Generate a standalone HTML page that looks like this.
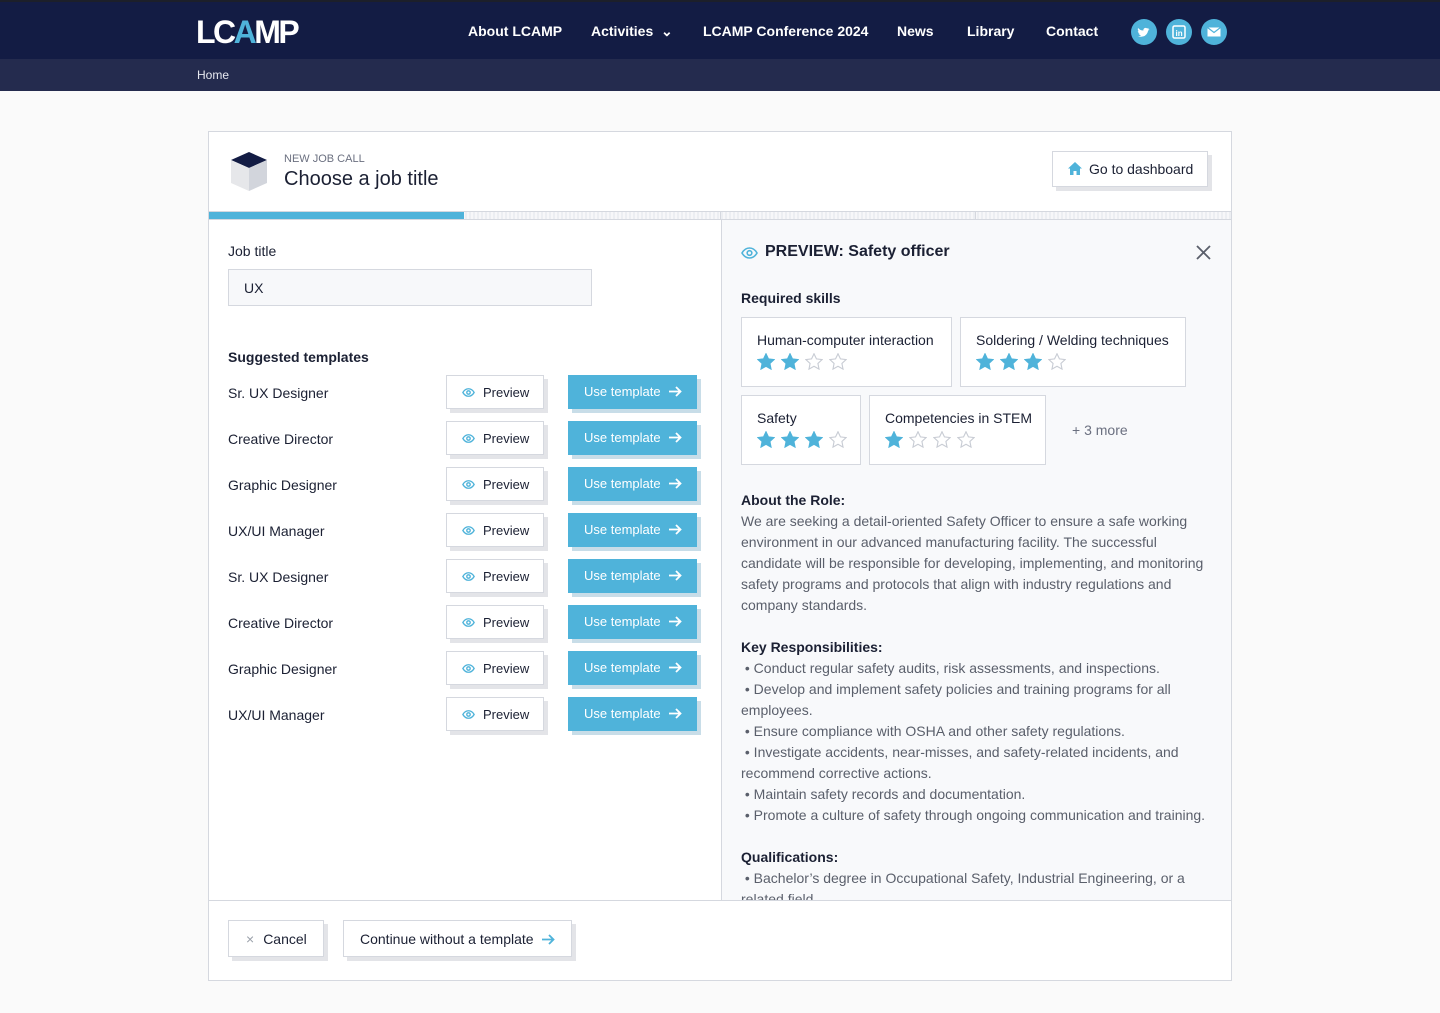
<!DOCTYPE html>
<html><head><meta charset="utf-8"><style>
*{box-sizing:border-box;margin:0;padding:0}
body{width:1440px;height:1013px;background:#fafafa;font-family:"Liberation Sans",Arial,sans-serif;color:#1b2033;position:relative;overflow:hidden}
.top{position:absolute;left:0;top:0;width:1440px;height:59px;background:#131c44;border-top:2px solid #1c1f2a}
.crumb{position:absolute;left:0;top:59px;width:1440px;height:32px;background:#242b4e;color:#e6e8ef;font-size:12px;padding:9px 0 0 197px}
.nav a{position:absolute;top:21px;color:#fff;font-weight:bold;font-size:14px;text-decoration:none}
.soc{position:absolute;top:17px;width:26px;height:26px;border-radius:50%;background:#4fb3da}
.card{position:absolute;left:208px;top:131px;width:1024px;height:850px;background:#fff;border:1px solid #d5d8df}
.abs{position:absolute}
.btn{position:absolute;background:#fff;border:1px solid #d5d8df;box-shadow:4px 4px 0 #e3e4e8;font-size:13px;color:#1b2033}
.ub{position:absolute;background:#4fb3da;color:#fff;font-size:13px;box-shadow:4px 4px 0 #c8dde8}
.row{position:absolute;left:19px;font-size:14px}
.skill{position:absolute;border:1px solid #d5d8df;background:#fff;font-size:14px;padding:14px 0 0 15px}
.skill .st{margin-top:5px;display:flex;gap:6px}
p.t{font-size:14px;line-height:21px;color:#5a5f6b}
h4{font-size:14px;font-weight:bold;color:#1b2033;line-height:21px}
</style></head><body>
<div class="top">
<div class="abs" style="left:196px;top:12px;font-size:32px;font-weight:bold;color:#fff;letter-spacing:-2.5px;font-family:'Liberation Sans',sans-serif">L<span>C</span><span style="color:#4fb3da">A</span>MP</div>
<div class="nav">
<a style="left:468px">About LCAMP</a>
<a style="left:591px">Activities &nbsp;⌄</a>
<a style="left:703px">LCAMP Conference 2024</a>
<a style="left:897px">News</a>
<a style="left:967px">Library</a>
<a style="left:1046px">Contact</a>
</div>
<div class="soc" style="left:1131px"><svg width="26" height="26" viewBox="0 0 26 26"><path d="M7 17c4 2 9 0 10-5l1.5-2-1.6.4.9-1.5-1.7.6c-1.3-1.3-4-.5-3.7 2-2.5 0-4-1-5.3-2.5-.7 1.3 0 2.8 1 3.3l-1.3-.2c0 1.2 1 2 2 2.4h-1.3c.4 1 1.4 1.5 2.300 1.6C9.5 17 8.3 17.2 7 17z" fill="#fff"/></svg></div>
<div class="soc" style="left:1166px"><svg width="26" height="26"><rect x="7" y="7" width="12" height="12" rx="1.5" fill="none" stroke="#fff" stroke-width="1.5"/><text x="9.5" y="17" font-size="8" font-weight="bold" fill="#fff" font-family="Liberation Sans">in</text></svg></div>
<div class="soc" style="left:1201px"><svg width="26" height="26"><rect x="6.5" y="8.5" width="13" height="9" fill="#fff"/><path d="M6.5 8.5l6.5 5 6.5-5" fill="none" stroke="#4fb3da" stroke-width="1.2"/></svg></div>
</div>
<div class="crumb">Home</div>

<div class="card">
<svg class="abs" style="left:21px;top:19px" width="38" height="41" viewBox="0 0 38 41"><path d="M1 9L19 1l18 8-18 8z" fill="#131c44"/><path d="M1 9l18 8v23L1 32z" fill="#e6e7ea"/><path d="M37 9L19 17v23l18-8z" fill="#d2d5dc"/></svg>
<div class="abs" style="left:75px;top:21px;font-size:11px;color:#6b7080">NEW JOB CALL</div>
<div class="abs" style="left:75px;top:36px;font-size:20px;font-weight:500">Choose a job title</div>
<div class="btn" style="left:843px;top:19px;width:156px;height:36px;font-size:14px;padding:9px 0 0 15px"><svg width="14" height="13" style="vertical-align:-1px;margin-right:7px"><path d="M7 0L0 6.5h2V13h3.5V9h3v4H12V6.5h2z" fill="#4fb3da"/></svg>Go to dashboard</div>
<div class="abs" style="left:0;top:79px;width:1022px;height:9px;background:repeating-linear-gradient(90deg,#eceef2 0 2px,#f7f7f9 2px 4px);border-top:1px solid #d5d8df;border-bottom:1px solid #d5d8df"></div>
<div class="abs" style="left:0;top:80px;width:255px;height:7px;background:#4fb3da"></div>
<div class="abs" style="left:511px;top:80px;width:1px;height:7px;background:#d5d8df"></div>
<div class="abs" style="left:766px;top:80px;width:1px;height:7px;background:#d5d8df"></div>

<div class="abs" style="left:19px;top:111px;font-size:14px;font-weight:500">Job title</div>
<div class="abs" style="left:19px;top:137px;width:364px;height:37px;border:1px solid #d5d8df;background:#f7f8fa;font-size:14px;padding:10px 0 0 15px">UX</div>
<div class="abs" style="left:19px;top:217px;font-size:14px;font-weight:bold">Suggested templates</div>

<div class="abs" style="left:512px;top:88px;width:510px;height:681px;background:#f8f9fb;border-left:1px solid #d5d8df;overflow:hidden">
<svg class="abs" style="left:19px;top:27px" width="17" height="12" viewBox="0 0 17 12"><path d="M1 6C3 2.5 5.5 1 8.5 1S14 2.5 16 6c-2 3.5-4.5 5-7.5 5S3 9.5 1 6z" fill="none" stroke="#4fb3da" stroke-width="1.6"/><circle cx="8.5" cy="6" r="2.3" fill="none" stroke="#4fb3da" stroke-width="1.6"/></svg>
<div class="abs" style="left:43px;top:23px;font-size:16px;font-weight:bold">PREVIEW: Safety officer</div>
<svg class="abs" style="left:474px;top:25px" width="15" height="15"><path d="M1 1l13 13M14 1L1 14" stroke="#5a5f6b" stroke-width="1.8"/></svg>
<div class="abs" style="left:19px;top:70px;font-size:14px;font-weight:bold">Required skills</div>
<div class="skill" style="left:19px;top:97px;width:211px;height:70px">Human-computer interaction<div class="st">S2</div></div>
<div class="skill" style="left:238px;top:97px;width:226px;height:70px">Soldering / Welding techniques<div class="st">S3</div></div>
<div class="skill" style="left:19px;top:175px;width:120px;height:70px">Safety<div class="st">S3</div></div>
<div class="skill" style="left:147px;top:175px;width:177px;height:70px">Competencies in STEM<div class="st">S1</div></div>
<div class="abs" style="left:350px;top:202px;font-size:14px;color:#6b7080">+ 3 more</div>
<div class="abs" style="left:19px;top:270px;width:475px">
<h4>About the Role:</h4>
<p class="t">We are seeking a detail-oriented Safety Officer to ensure a safe working environment in our advanced manufacturing facility. The successful candidate will be responsible for developing, implementing, and monitoring safety programs and protocols that align with industry regulations and company standards.</p>
<h4 style="margin-top:21px">Key Responsibilities:</h4>
<p class="t">&nbsp;• Conduct regular safety audits, risk assessments, and inspections.<br>&nbsp;• Develop and implement safety policies and training programs for all employees.<br>&nbsp;• Ensure compliance with OSHA and other safety regulations.<br>&nbsp;• Investigate accidents, near-misses, and safety-related incidents, and recommend corrective actions.<br>&nbsp;• Maintain safety records and documentation.<br>&nbsp;• Promote a culture of safety through ongoing communication and training.</p>
<h4 style="margin-top:21px">Qualifications:</h4>
<p class="t">&nbsp;• Bachelor’s degree in Occupational Safety, Industrial Engineering, or a related field.</p>
</div>
</div>
<div class="abs" style="left:0;top:768px;width:1022px;height:1px;background:#d5d8df"></div>
<div class="btn" style="left:19px;top:788px;width:96px;height:37px;font-size:14px;padding:10px 0 0 17px"><span style="color:#9aa0aa;margin-right:9px">×</span>Cancel</div>
<div class="btn" style="left:134px;top:788px;width:229px;height:37px;font-size:14px;padding:10px 0 0 16px">Continue without a template <svg width="13" height="11" viewBox="0 0 13 11" style="margin-left:5px;vertical-align:-1px"><path d="M0 5.5h11.5M7 1l4.5 4.5L7 10" fill="none" stroke="#4fb3da" stroke-width="1.8"/></svg></div>
<div id="rows"></div>
</div>
<script>
var names=["Sr. UX Designer","Creative Director","Graphic Designer","UX/UI Manager","Sr. UX Designer","Creative Director","Graphic Designer","UX/UI Manager"];
var h="";
var eye='<svg width="13" height="9" viewBox="0 0 17 12" style="margin-right:8px;vertical-align:0"><path d="M1 6C3 2.5 5.5 1 8.5 1S14 2.5 16 6c-2 3.5-4.5 5-7.5 5S3 9.5 1 6z" fill="none" stroke="#4fb3da" stroke-width="1.8"/><circle cx="8.5" cy="6" r="2.3" fill="none" stroke="#4fb3da" stroke-width="1.8"/></svg>';
var arr='<svg width="13" height="11" viewBox="0 0 13 11" style="margin-left:8px;vertical-align:-1px"><path d="M0 5.5h11.5M7 1l4.5 4.5L7 10" fill="none" stroke="#fff" stroke-width="1.8"/></svg>';
names.forEach(function(n,i){var y=243+i*46;
h+='<div class="row" style="top:'+(y+10)+'px">'+n+'</div>';
h+='<div class="btn" style="left:237px;top:'+y+'px;width:98px;height:34px;padding:9px 0 0 15px">'+eye+'Preview</div>';
h+='<div class="ub" style="left:359px;top:'+y+'px;width:129px;height:34px;padding:9px 0 0 16px">Use template'+arr+'</div>';});
document.getElementById("rows").innerHTML=h;
function star(f){return '<svg width="18" height="17" viewBox="0 0 24 23"><path d="M12 1l3.3 7 7.7.9-5.7 5.3 1.5 7.6L12 18l-6.8 3.8 1.5-7.6L1 8.9l7.7-.9z" fill="'+(f?'#4fb3da':'none')+'" stroke="'+(f?'#4fb3da':'#c8ccd4')+'" stroke-width="1.5"/></svg>';}
document.querySelectorAll('.st').forEach(function(e){var k=+e.textContent.slice(1),s="";for(var i=0;i<4;i++)s+=star(i<k);e.innerHTML=s;});
</script>
</body></html>
